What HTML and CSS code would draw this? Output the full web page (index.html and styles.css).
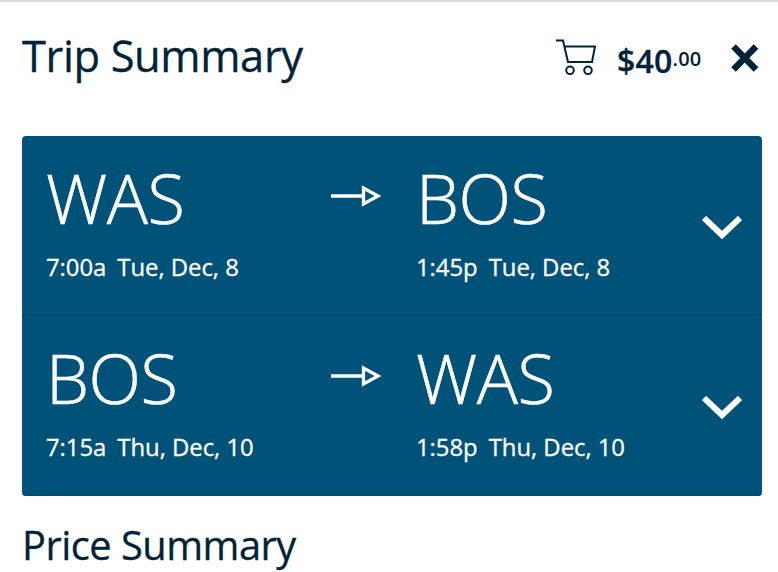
FILE: index.html
```html
<!DOCTYPE html>
<html lang="en">
<head>
<meta charset="utf-8">
<title>Trip Summary</title>
<link rel="stylesheet" href="styles.css">
</head>
<body>
<header class="header">
  <h1 class="title">Trip Summary</h1>
  <svg class="cart" viewBox="0 0 42 38" width="42" height="38"><path d="M0 1.500H7L12 23H36L39 7.500H8.500"/><circle cx="14" cy="31.300" r="3.800"/><circle cx="32" cy="31.300" r="3.800"/></svg>
  <div class="price"><span class="dollars">$40</span><span class="cents">.00</span></div>
  <svg class="close" viewBox="0 0 28 28" width="28" height="28"><path d="M2.500 2.500L25 25.500M25 2.500L2.500 25.500"/></svg>
</header>
<main class="trips">
  <section class="leg">
    <div class="stop"><div class="city">WAS</div><div class="time"><span>7:00a</span><span>Tue, Dec, 8</span></div></div>
    <svg class="arrow" viewBox="0 0 50 22" width="50" height="22"><path d="M0 11H32M32.500 3V19L47 11Z"/></svg>
    <div class="stop"><div class="city">BOS</div><div class="time"><span>1:45p</span><span>Tue, Dec, 8</span></div></div>
    <svg class="chevron" viewBox="0 0 40 24" width="40" height="24"><path d="M2 2L20 19L38 2"/></svg>
  </section>
  <section class="leg">
    <div class="stop"><div class="city">BOS</div><div class="time"><span>7:15a</span><span>Thu, Dec, 10</span></div></div>
    <svg class="arrow" viewBox="0 0 50 22" width="50" height="22"><path d="M0 11H32M32.500 3V19L47 11Z"/></svg>
    <div class="stop"><div class="city">WAS</div><div class="time"><span>1:58p</span><span>Thu, Dec, 10</span></div></div>
    <svg class="chevron" viewBox="0 0 40 24" width="40" height="24"><path d="M2 2L20 19L38 2"/></svg>
  </section>
</main>
<h2 class="title price-title">Price Summary</h2>
</body>
</html>
```
FILE: styles.css
```css
* { box-sizing: border-box; }
body { margin: 0; height: 572px; overflow: hidden; border-top: 2px solid #dcdce0; background: #fff; color: #002337; font-family: "Open Sans", sans-serif; }
svg { fill: none; flex: none; }
.header { height: 134px; padding: 27px 19px 0 22px; display: flex; align-items: flex-start; }
.title { margin: 0; font-size: 43.5px; line-height: 54px; font-weight: 400; letter-spacing: -0.4px; white-space: nowrap; -webkit-text-stroke: 0.3px; }
.cart { margin: 10px 0 0 auto; stroke: #002337; stroke-width: 2; }
.price { display: flex; width: 85px; margin: 10px 0 0 19px; font-weight: 600; -webkit-text-stroke: 0.3px; }
.dollars { font-size: 32px; line-height: 44px; letter-spacing: 0.2px; }
.cents { font-size: 20px; line-height: 39px; letter-spacing: 0.2px; -webkit-text-stroke: 0; }
.close { margin: 15px 0 0 29px; stroke: #002337; stroke-width: 6.5; }
.trips { margin: 0 16px 0 22px; height: 360px; border-radius: 4px; overflow: hidden; background: #005279; color: #fff; }
.leg { height: 180px; padding: 24px 20px 0 24px; display: grid; grid-template-columns: 285px 85px 1fr 40px; align-items: start; border-bottom: 2px solid #00496c; }
.city { height: 80px; font-size: 68.6px; line-height: 75px; font-weight: 300; letter-spacing: -0.5px; -webkit-text-stroke: 0.6px; }
.time { display: flex; gap: 11px; margin-top: 10px; font-size: 23.9px; line-height: 34px; letter-spacing: -0.04px; white-space: nowrap; -webkit-text-stroke: 0.3px; }
.arrow { margin-top: 25px; stroke: #fff; stroke-width: 3.3; }
.chevron { margin-top: 56px; stroke: #fff; stroke-width: 6; }
.price-title { margin: 21px 0 0 22px; font-size: 39.8px; line-height: 56px; letter-spacing: -0.5px; }
```
